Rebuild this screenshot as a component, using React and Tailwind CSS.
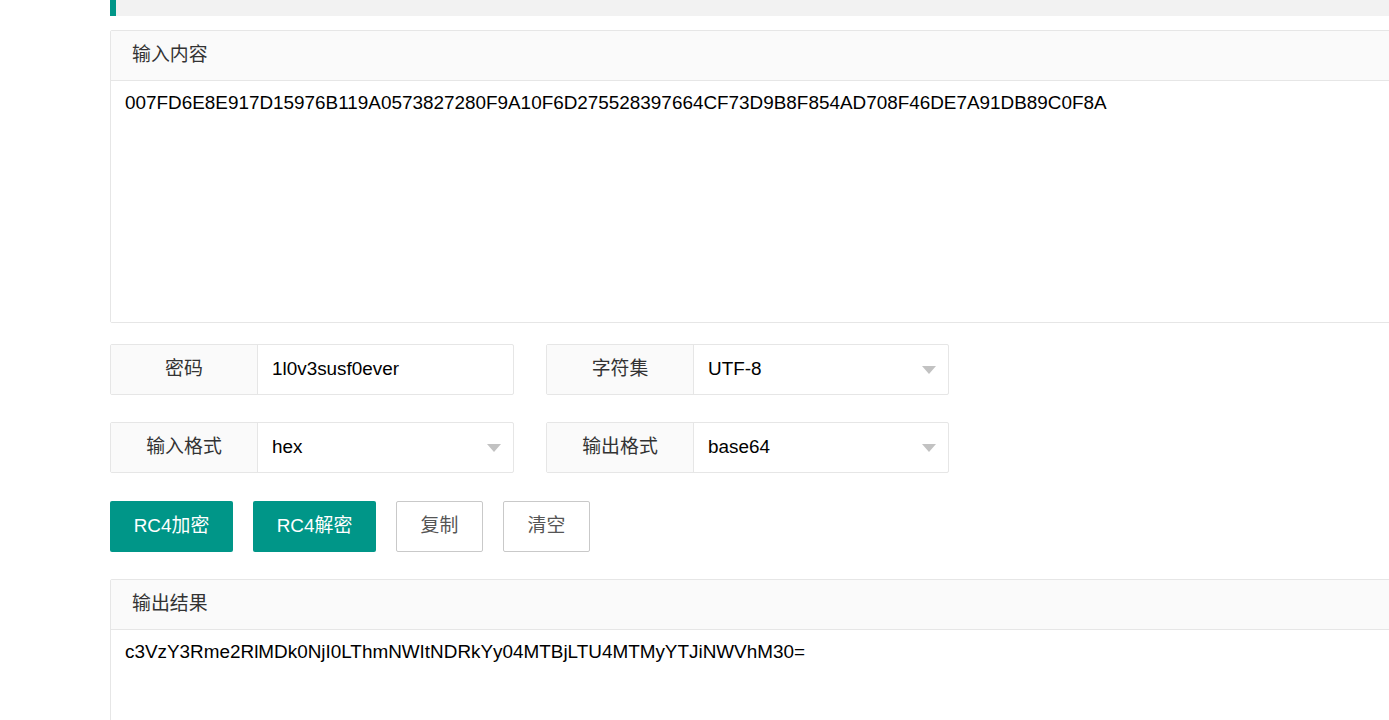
import React from 'react';

const FIELD = 'flex h-[51px] border border-[#e6e6e6] rounded-[2px] bg-white';
const LABEL = 'w-[147px] shrink-0 flex items-center justify-center bg-[#fafafa] border-r border-[#e6e6e6] text-[#333]';

// a label + text input pair
const InputField = ({ label, value }) => (
  <div className={`${FIELD} w-[404px]`}>
    <div className={LABEL}>{label}</div>
    <div className="flex-1 flex items-center pl-[14px] text-black">{value}</div>
  </div>
);

// a label + select pair, with the grey down triangle
const SelectField = ({ label, value, width }) => (
  <div className={`${FIELD} ${width}`}>
    <div className={LABEL}>{label}</div>
    <div className="flex-1 flex items-center justify-between pl-[14px] pr-[12px] text-black">
      <span>{value}</span>
      <span className="w-0 h-0 border-x-[7.5px] border-x-transparent border-t-[8px] border-t-[#c2c2c2]" />
    </div>
  </div>
);

const Card = ({ title, children, extra = '' }) => (
  <div className={`border border-[#e6e6e6] rounded-[2px] bg-white ${extra}`}>
    <div className="h-[50px] flex items-center px-[21px] bg-[#fafafa] border-b border-[#e6e6e6] text-[#333]">
      {title}
    </div>
    {children}
  </div>
);

export default function App() {
  const input =
    '007FD6E8E917D15976B119A0573827280F9A10F6D275528397664CF73D9B8F854AD708F46DE7A91DB89C0F8A';
  const output = 'c3VzY3Rme2RlMDk0NjI0LThmNWItNDRkYy04MTBjLTU4MTMyYTJiNWVhM30=';

  return (
    <div className="w-screen h-[720px] overflow-hidden bg-white text-[18.9px] font-['Liberation_Sans','Noto_Sans_CJK_SC',sans-serif]">
      <div className="ml-[110px] w-[1320px]">
        {/* quote bar at the top */}
        <div className="h-[16px] bg-[#f2f2f2] border-l-[6px] border-[#009688]" />

        {/* input card */}
        <Card title="输入内容" extra="mt-[14px]">
          <textarea
            readOnly
            value={input}
            className="block w-full h-[241px] resize-none px-[14px] pt-[9px] pb-[7px] leading-[26px] text-black outline-none bg-white"
          />
        </Card>

        {/* options */}
        <div className="mt-[21px] flex gap-[32px]">
          <InputField label="密码" value="1l0v3susf0ever" />
          <SelectField label="字符集" value="UTF-8" width="w-[403px]" />
        </div>
        <div className="mt-[27px] flex gap-[32px]">
          <SelectField label="输入格式" value="hex" width="w-[404px]" />
          <SelectField label="输出格式" value="base64" width="w-[403px]" />
        </div>

        {/* action buttons */}
        <div className="mt-[28px] flex gap-[20px]">
          <button className="w-[123px] h-[51px] rounded-[2px] bg-[#009688] text-white">RC4加密</button>
          <button className="w-[123px] h-[51px] rounded-[2px] bg-[#009688] text-white">RC4解密</button>
          <button className="w-[87px] h-[51px] rounded-[2px] border border-[#c9c9c9] bg-white text-[#555]">复制</button>
          <button className="w-[87px] h-[51px] rounded-[2px] border border-[#c9c9c9] bg-white text-[#555]">清空</button>
        </div>

        {/* output card */}
        <Card title="输出结果" extra="mt-[27px]">
          <div className="h-[240px] px-[14px] pt-[9px] leading-[26px] text-black">{output}</div>
        </Card>
      </div>
    </div>
  );
}
